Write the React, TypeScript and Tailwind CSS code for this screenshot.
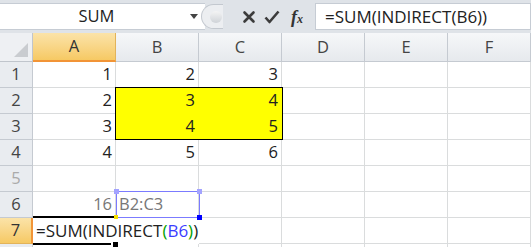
import React from "react";

const font = { fontFamily: '"Open Sans", "Noto Sans", sans-serif' };

const cols = ["A", "B", "C", "D", "E", "F"];
const data: Record<number, (string | null)[]> = {
  1: ["1", "2", "3", null, null, null],
  2: ["2", "3", "4", null, null, null],
  3: ["3", "4", "5", null, null, null],
  4: ["4", "5", "6", null, null, null],
  5: [null, null, null, null, null, null],
  6: ["16", null, null, null, null, null],
};

function Formula() {
  return (
    <>
      <span>=SUM(INDIRECT</span>
      <span className="text-[#00a000]">(</span>
      <span className="text-[#3c3cff]">B6</span>
      <span className="text-[#00a000]">)</span>
      <span>)</span>
    </>
  );
}

export default function App() {
  return (
    <div className="w-[531px] h-[247px] overflow-hidden bg-white relative text-[#222]" style={font}>
      {/* Formula bar */}
      <div className="h-[33px] bg-[#dfe3e8] pt-[3px] pb-[3px] flex">
        <div className="w-[205px] h-[27px] bg-white flex items-center border-y border-[#c6ccd4]">
          <div className="flex-1 text-center text-[16.5px] pl-[4px]">SUM</div>
          <svg width="10" height="6" viewBox="0 0 10 6" className="mr-[6px]">
            <path d="M1 0 L9 0 L5 5 Z" fill="#444" />
          </svg>
        </div>
        <div className="w-[110px] h-[27px] flex items-center relative">
          <div className="absolute left-[-4px] top-[1px] w-[22px] h-[25px] rounded-l-full bg-[#eceef1] border border-[#c3c8cf] border-r-0 flex items-center justify-end">
            <div className="w-[12px] h-[12px] rounded-full bg-gradient-to-b from-[#f4f4f4] to-[#cfd3d8] mr-[1px]" />
          </div>
          <svg width="14" height="14" viewBox="0 0 14 14" className="absolute left-[37px] top-[7px]">
            <path d="M2.5 2.5 L11.5 11.5 M11.5 2.5 L2.5 11.5" stroke="#3c3c3c" strokeWidth="2.6" strokeLinecap="round" />
          </svg>
          <svg width="16" height="14" viewBox="0 0 16 14" className="absolute left-[59px] top-[7px]">
            <path d="M1.5 7.5 L5.5 12 L14.5 1.5" stroke="#3c3c3c" strokeWidth="2.6" fill="none" strokeLinejoin="round" />
          </svg>
          <span
            className="absolute left-[86px] top-[1px] text-[18px] italic font-bold text-[#333]"
            style={{ fontFamily: '"Liberation Serif", serif' }}
          >
            f<span className="text-[12px]">x</span>
          </span>
        </div>
        <div className="flex-1 h-[27px] bg-white border border-[#c6ccd4] flex items-center pl-[9px] text-[17px] whitespace-nowrap">
          =SUM(INDIRECT(B6))
        </div>
      </div>

      {/* Grid */}
      <div className="grid grid-cols-[33px_repeat(6,83px)] grid-rows-[29px_repeat(8,26px)]">
        {/* corner */}
        <div className="bg-[#eef0f3] border-r border-b border-[#c0c5cc] relative">
          <svg width="14" height="14" viewBox="0 0 14 14" className="absolute right-[4px] bottom-[4px]">
            <path d="M14 0 L14 14 L0 14 Z" fill="#c9ccd0" />
          </svg>
        </div>
        {cols.map((c, i) =>
          i === 0 ? (
            <div
              key={c}
              className="bg-gradient-to-b from-[#fbe3a8] to-[#f6c963] border-r border-[#e2b35a] border-b-2 border-b-[#f29436] flex items-center justify-center text-[16.5px] text-[#333]"
            >
              {c}
            </div>
          ) : (
            <div
              key={c}
              className="bg-gradient-to-b from-[#f6f7f9] to-[#e6e9ed] border-r border-b border-[#c5cad1] flex items-center justify-center text-[16.5px] text-[#444]"
            >
              {c}
            </div>
          )
        )}

        {[1, 2, 3, 4, 5, 6].map((r) => (
          <React.Fragment key={r}>
            <div
              className={`bg-[#e9ecf0] border-r border-b border-[#c5cad1] flex items-center justify-center text-[16.5px] ${
                r === 5 ? "text-[#aaa]" : "text-[#444]"
              }`}
            >
              {r}
            </div>
            {data[r].map((v, ci) => {
              const yellow = (r === 2 || r === 3) && (ci === 1 || ci === 2);
              const gray = r === 6;
              return (
                <div
                  key={ci}
                  className={`border-r border-b flex items-center justify-end pr-[3px] text-[16.5px] ${
                    yellow ? "bg-[#ffff00] border-[#ffff00]" : "bg-white border-[#dadcdd]"
                  } ${gray ? "text-[#777]" : "text-[#222]"}`}
                >
                  {v}
                </div>
              );
            })}
          </React.Fragment>
        ))}

        {/* row 7 */}
        <div className="bg-gradient-to-b from-[#fbe3a8] to-[#f6c963] border-r-2 border-r-[#f29436] border-b border-[#e2b35a] flex items-center justify-center text-[16.5px] text-[#333]">
          7
        </div>
        <div className="bg-white relative flex items-center pl-[3px] text-[17px] whitespace-nowrap">
          <Formula />
        </div>
        <div className="bg-white" />
        <div className="bg-white border-r border-b border-[#dadcdd]" />
        <div className="bg-white border-r border-b border-[#dadcdd]" />
        <div className="bg-white border-r border-b border-[#dadcdd]" />
        <div className="bg-white border-r border-b border-[#dadcdd]" />

        {/* row 8 */}
        <div className="bg-[#e9ecf0] border-r border-[#c5cad1]" />
        {cols.map((c) => (
          <div key={c} className="bg-white border-r border-[#dadcdd]" />
        ))}
      </div>

      {/* Yellow range border B2:C3 */}
      <div className="absolute left-[115px] top-[87px] w-[168px] h-[53px] border border-black pointer-events-none" />

      {/* B6 reference range */}
      <div className="absolute left-[116px] top-[191px] w-[84px] h-[27px] border border-[#7b7bff] pointer-events-none flex items-center pl-[2px] text-[16.5px] text-[#777]">
        B2:C3
      </div>
      <div className="absolute left-[114px] top-[189px] w-[5px] h-[5px] bg-[#a3a3ff]" />
      <div className="absolute left-[197px] top-[189px] w-[5px] h-[5px] bg-[#a3a3ff]" />
      <div className="absolute left-[197px] top-[215px] w-[5px] h-[5px] bg-[#0000ff]" />

      {/* Active cell A7 borders */}
      <div className="absolute left-[33px] top-[216px] w-[82px] h-[2px] bg-black" />
      <div className="absolute left-[114px] top-[215px] w-[4px] h-[4px] bg-[#f5e000]" />
      <div className="absolute left-[33px] top-[243px] w-[78px] h-[2px] bg-black" />
      <div className="absolute left-[113px] top-[242px] w-[5px] h-[5px] bg-black" />
    </div>
  );
}
